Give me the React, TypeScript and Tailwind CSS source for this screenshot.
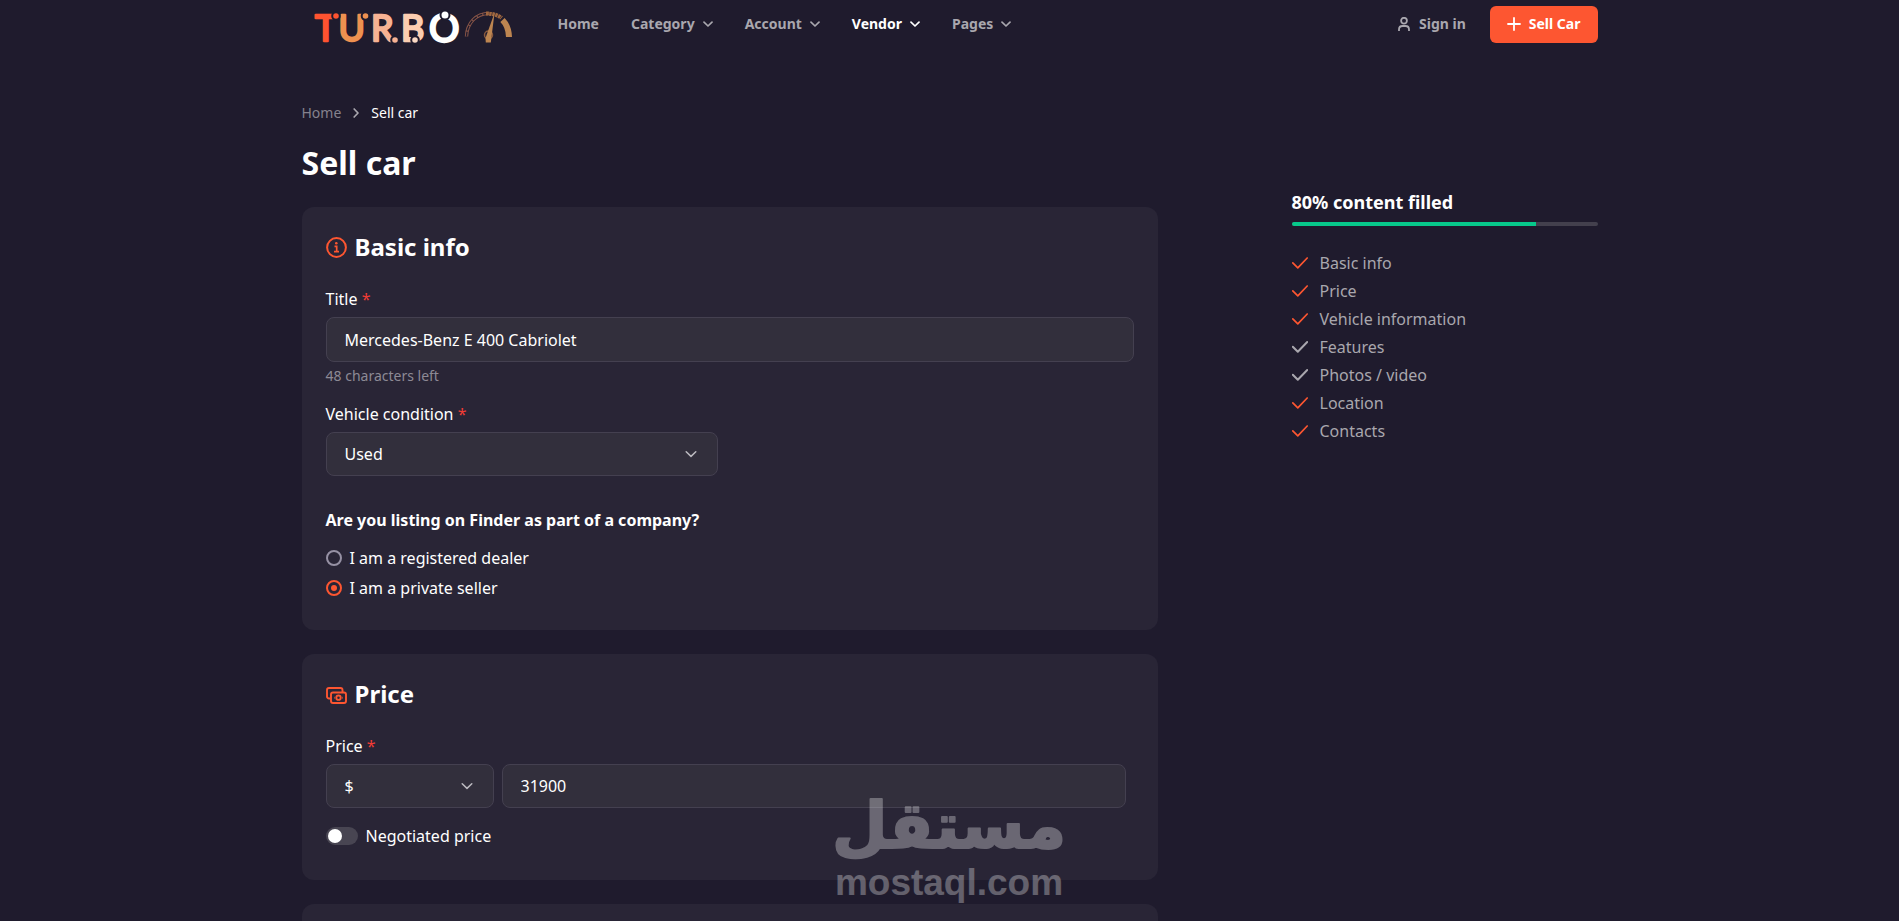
import type { ReactNode } from "react";
import { useState } from "react";

type NavItem = { label: string; menu: boolean; active?: boolean };

const navItems: NavItem[] = [
  { label: "Home", menu: false },
  { label: "Category", menu: true },
  { label: "Account", menu: true },
  { label: "Vendor", menu: true, active: true },
  { label: "Pages", menu: true },
];

const steps = [
  { label: "Basic info", done: true },
  { label: "Price", done: true },
  { label: "Vehicle information", done: true },
  { label: "Features", done: false },
  { label: "Photos / video", done: false },
  { label: "Location", done: true },
  { label: "Contacts", done: true },
];

const filled = 80;

function Chevron({ className }: { className: string }) {
  return (
    <svg className={className} viewBox="0 0 12 12" fill="none" stroke="currentColor" strokeLinecap="round" strokeLinejoin="round" aria-hidden="true">
      <path d="M1.2 3.800 6 8.400l4.800-4.600" />
    </svg>
  );
}

function Logo() {
  return (
    <svg className="h-10 w-50 overflow-visible" viewBox="0 0 200 40" role="img" aria-label="Turbo">
      <g fontFamily="Lato, sans-serif" fontSize="36" fontWeight="400" strokeWidth="2.400" strokeLinejoin="round">
        <text x="1" y="37" fill="#ff5330" stroke="#ff5330">T</text>
        <text x="24.500" y="37" fill="#ee9150" stroke="#ee9150">U</text>
        <text x="57" y="37" fill="#f7b293" stroke="#f7b293">R</text>
        <text x="87" y="37" fill="#fbcdb0" stroke="#fbcdb0">B</text>
        <text x="115" y="38" fontSize="38" fill="#ffffff" stroke="#ffffff">O</text>
      </g>
      <g stroke="#1f1b2d" strokeWidth="2">
        <circle cx="22" cy="12" r="3.800" fill="#ff5330" />
        <circle cx="51.500" cy="12" r="3.800" fill="#ee9150" />
        <circle cx="81" cy="36" r="3.800" fill="#f7b293" />
        <circle cx="101" cy="36" r="3.800" fill="#fbd9c4" />
        <circle cx="131" cy="11" r="4.500" fill="#ffffff" />
      </g>
      <g fill="none">
        <path d="M152.500 32.500C153 19 162 9.500 175 9.500" stroke="#8a5648" strokeWidth="3.400" />
        <path d="M152.500 32.500C153 19 162 9.500 175 9.500" stroke="#1f1b2d" strokeWidth="1.400" strokeDasharray="5 1" />
        <path d="M172 9.500c6 0 12 1.500 15.500 4.500" stroke="#a0673f" strokeWidth="4" strokeDasharray="2.500 0.600" />
        <path d="M188.500 16c4 4 6.300 9.500 6.500 17" stroke="#bd8550" strokeWidth="6" />
        <circle cx="174.500" cy="31" r="4" stroke="#8a5a3e" strokeWidth="1.500" />
      </g>
      <path d="M180.500 9 176.800 38.500h-5L171.500 34z" fill="#bd8550" />
    </svg>
  );
}

function Required() {
  return <span className="text-[#f23c35]">*</span>;
}

function Section({ title, icon, children }: { title: string; icon: ReactNode; children: ReactNode }) {
  return (
    <section className="rounded-xl bg-[#292536] p-6">
      <h2 className="mb-6 flex items-center gap-2 text-2xl leading-8 font-bold">
        {icon}
        {title}
      </h2>
      {children}
    </section>
  );
}

function SelectBox({ id, label, options }: { id: string; label?: string; options: string[] }) {
  return (
    <div className="relative">
      <select
        id={id}
        aria-label={label}
        className="h-11 w-full appearance-none rounded-lg border border-[#444050] bg-[#322f3c] px-[18px] text-base text-white outline-none"
      >
        {options.map((option) => (
          <option key={option}>{option}</option>
        ))}
      </select>
      <Chevron className="pointer-events-none absolute top-4 right-[21px] size-3 stroke-[1.5] text-[#bcbac0]" />
    </div>
  );
}

function Radio({ id, label, checked, onSelect }: { id: string; label: string; checked: boolean; onSelect: () => void }) {
  return (
    <div className="flex items-center gap-2">
      <input
        id={id}
        type="radio"
        name="seller"
        checked={checked}
        onChange={onSelect}
        className="grid size-4 appearance-none place-items-center rounded-full border-2 border-[#9691a4] before:size-1.5 before:rounded-full checked:border-[#fd5631] checked:before:bg-[#fd5631]"
      />
      <label htmlFor={id}>{label}</label>
    </div>
  );
}

function InfoIcon() {
  return (
    <svg className="size-[21px] text-[#fd5631]" viewBox="0 0 21 21" fill="none" stroke="currentColor" strokeWidth="2" aria-hidden="true">
      <circle cx="10.500" cy="10.500" r="9.400" />
      <path d="M8.500 9.300h2.200v5M8 14.600h5" strokeWidth="1.700" />
      <circle cx="10.300" cy="6.300" r="1.300" fill="currentColor" stroke="none" />
    </svg>
  );
}

function CashIcon() {
  return (
    <svg className="size-[21px] text-[#fd5631]" viewBox="0 0 21 21" fill="none" stroke="currentColor" strokeWidth="1.900" aria-hidden="true">
      <path d="M4 14.500H3a2 2 0 0 1-2-2V6a2 2 0 0 1 2-2h11.500a2 2 0 0 1 2 2v2" />
      <rect x="5" y="8.500" width="15" height="10.500" rx="2" />
      <circle cx="12.500" cy="13.700" r="2.200" />
      <path d="M8 13.700h.6M16.400 13.700h.6" />
    </svg>
  );
}

function Watermark() {
  return (
    <svg
      className="pointer-events-none absolute bottom-4 left-1/2 h-[110px] w-[230px] -translate-x-1/2 overflow-visible opacity-30"
      viewBox="0 0 230 110"
      fill="#fff"
      stroke="#fff"
      strokeLinejoin="round"
      fontWeight="700"
      aria-hidden="true"
    >
      <text x="114" y="53" textAnchor="middle" direction="rtl" fontFamily="'DejaVu Sans', sans-serif" fontSize="64" strokeWidth="2">مستقل</text>
      <text x="114" y="100" textAnchor="middle" fontFamily="'Liberation Sans', sans-serif" fontSize="37" strokeWidth="0">mostaql.com</text>
    </svg>
  );
}

export default function App() {
  const [seller, setSeller] = useState("private");
  const [title, setTitle] = useState("Mercedes-Benz E 400 Cabriolet");
  const [price, setPrice] = useState("31900");

  return (
    <div className="relative flex h-screen flex-col overflow-hidden bg-[#1f1b2d] font-['Noto_Sans',sans-serif] text-base text-white">
      <header className="mx-auto flex w-full max-w-[1320px] items-center pt-1 pr-3 pl-6">
        <a href="#home">
          <Logo />
        </a>
        <nav className="ml-11 flex items-center gap-8 text-sm font-bold">
          {navItems.map((item) => (
            <a
              key={item.label}
              href="#menu"
              className={item.active ? "flex items-center gap-2 text-white" : "flex items-center gap-2 text-[#a9a7ae]"}
            >
              {item.label}
              {item.menu && <Chevron className="size-2.5 stroke-2" />}
            </a>
          ))}
        </nav>
        <a href="#signin" className="ml-auto flex items-center gap-2 text-sm font-bold text-[#a9a7ae]">
          <svg className="size-3.5" viewBox="0 0 14 14" fill="none" stroke="currentColor" strokeWidth="1.800" aria-hidden="true">
            <circle cx="7" cy="3.700" r="2.900" />
            <path d="M2 14v-1.500C2 10.300 3.700 9 5.500 9h3c1.800 0 3.500 1.300 3.500 3.500V14" />
          </svg>
          Sign in
        </a>
        <button type="button" className="ml-6 flex h-[37px] items-center gap-2 rounded-md bg-[#fd5631] px-[17px] text-sm font-bold">
          <svg className="size-3.5" viewBox="0 0 14 14" stroke="currentColor" strokeWidth="1.800" strokeLinecap="round" aria-hidden="true">
            <path d="M7 1v12M1 7h12" />
          </svg>
          Sell Car
        </button>
      </header>

      <div className="mx-auto grid min-h-0 w-full max-w-[1320px] flex-1 grid-cols-12 gap-x-6 px-3 pt-[59px]">
        <main className="col-span-8 flex min-h-0 flex-col">
          <nav aria-label="Breadcrumb" className="flex items-center gap-2.5 text-sm">
            <a href="#home" className="text-[#85828d]">Home</a>
            <Chevron className="size-2.5 -rotate-90 stroke-2 text-[#a9a7ae]" />
            <span>Sell car</span>
          </nav>
          <h1 className="mt-5 mb-6 text-[32px] leading-10 font-bold">Sell car</h1>

          <div className="flex min-h-0 flex-1 flex-col gap-6">
            <Section title="Basic info" icon={<InfoIcon />}>
              <label htmlFor="title" className="mb-1.5 block">
                Title <Required />
              </label>
              <input
                id="title"
                type="text"
                value={title}
                onChange={(event) => setTitle(event.target.value)}
                className="block h-[45px] w-full rounded-lg border border-[#444050] bg-[#322f3c] px-[18px] outline-none"
              />
              <p className="mt-1 text-sm text-[#8d8a95]">48 characters left</p>
              <div className="mt-4 w-[392px]">
                <label htmlFor="condition" className="mb-1.5 block">
                  Vehicle condition <Required />
                </label>
                <SelectBox id="condition" options={["Used", "New"]} />
              </div>
              <fieldset className="mt-8 mb-1.5">
                <legend className="mb-3.5 font-bold">Are you listing on Finder as part of a company?</legend>
                <div className="flex flex-col gap-1.5">
                  <Radio id="dealer" label="I am a registered dealer" checked={seller === "dealer"} onSelect={() => setSeller("dealer")} />
                  <Radio id="private" label="I am a private seller" checked={seller === "private"} onSelect={() => setSeller("private")} />
                </div>
              </fieldset>
            </Section>

            <Section title="Price" icon={<CashIcon />}>
              <label htmlFor="price" className="mb-1.5 block">
                Price <Required />
              </label>
              <div className="flex gap-2 pr-2">
                <div className="w-[168px]">
                  <SelectBox id="currency" label="Currency" options={["$", "€", "£"]} />
                </div>
                <input
                  id="price"
                  type="text"
                  value={price}
                  onChange={(event) => setPrice(event.target.value)}
                  className="h-11 min-w-0 flex-1 rounded-lg border border-[#444050] bg-[#322f3c] px-[18px] outline-none"
                />
              </div>
              <div className="mt-4 mb-2 flex items-center gap-2">
                <input
                  id="negotiated"
                  type="checkbox"
                  role="switch"
                  className="flex h-[18px] w-8 appearance-none items-center rounded-full bg-[#484552] px-0.5 before:size-3.5 before:rounded-full before:bg-white checked:justify-end checked:bg-[#fd5631]"
                />
                <label htmlFor="negotiated">Negotiated price</label>
              </div>
            </Section>

            <section className="flex-1 rounded-t-xl bg-[#292536]" />
          </div>
        </main>

        <aside className="col-span-3 col-start-10 pt-[87px]">
          <h2 className="text-lg leading-6 font-bold">{filled}% content filled</h2>
          <div className="mt-2 h-1 overflow-hidden rounded-full bg-[#43404d]">
            <div className="h-full bg-[#07c98b]" style={{ width: `${filled}%` }} />
          </div>
          <ul className="mt-[25px] flex flex-col gap-1">
            {steps.map((step) => (
              <li key={step.label}>
                <a href="#section" className="flex items-center gap-3 text-[#a9a7ae]">
                  <svg
                    className={step.done ? "size-4 stroke-[1.7] text-[#fd5631]" : "size-4 stroke-2 text-[#a9a7ae]"}
                    viewBox="0 0 16 16"
                    fill="none"
                    stroke="currentColor"
                    strokeLinecap="round"
                    strokeLinejoin="round"
                    aria-hidden="true"
                  >
                    <path d="m.8 7.800 5 5L15.200 3" />
                  </svg>
                  {step.label}
                </a>
              </li>
            ))}
          </ul>
        </aside>
      </div>
      <Watermark />
    </div>
  );
}
